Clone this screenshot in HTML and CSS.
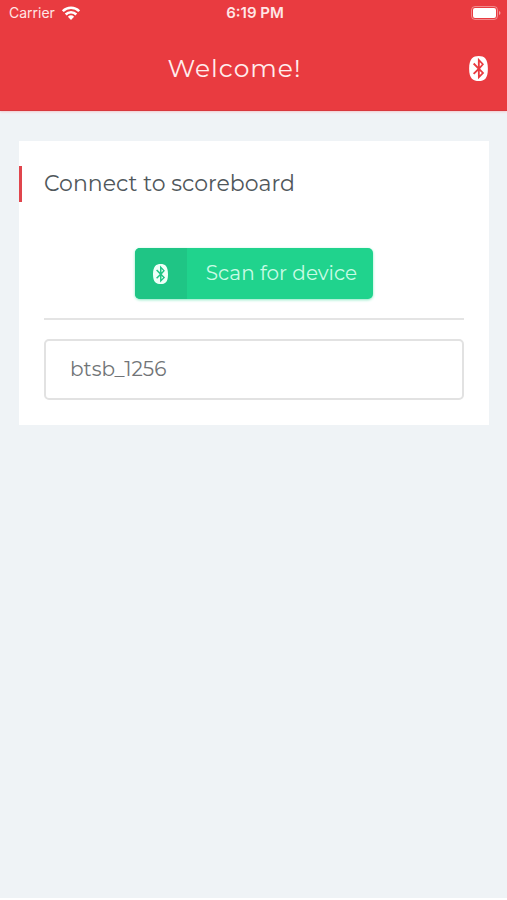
FILE: index.html
```html
<!DOCTYPE html>
<html lang="en">
<head>
  <meta charset="utf-8">
  <meta name="viewport" content="width=device-width, initial-scale=1">
  <title>Welcome!</title>
  <link rel="stylesheet" href="styles.css">
</head>
<body>
  <svg class="sprite" aria-hidden="true">
    <symbol id="bluetooth" viewBox="32 0 384 512">
      <path fill="currentColor" d="M292.6 171.1L249.7 214l-.3-86 43.2 43.1m-43.2 219.8l43.1-43.1-42.9-42.9-.2 86zM416 259.4C416 465 344.1 512 230.9 512S32 465 32 259.4 115.4 0 228.6 0 416 53.9 416 259.4zm-158.5 0l79.4-88.6L211.8 36.5v176.9L138 139.6l-27 26.9 92.7 93-92.7 93 26.9 26.9 73.8-73.8 2.3 170 127.4-127.5-83.9-88.7z"/>
    </symbol>
  </svg>
  <header class="header">
    <div class="status">
      <div class="carrier">
        <span>Carrier</span>
        <svg class="wifi" viewBox="0 0 18 14" aria-hidden="true">
          <g fill="none" stroke="currentColor" stroke-width="2.6">
            <path d="M.8 5.2a11.6 11.6 0 0 1 16.4 0"/>
            <path d="M3.7 8.5a7.5 7.5 0 0 1 10.6 0"/>
          </g>
          <path fill="currentColor" d="M5.9 10.8a4.5 4.5 0 0 1 6.2 0L9 13.9z"/>
        </svg>
      </div>
      <span class="clock">6:19 PM</span>
      <svg class="battery" viewBox="0 0 30 14" aria-hidden="true">
        <rect x=".5" y=".5" width="26" height="13" rx="3.5" fill="none" stroke="currentColor" opacity=".4"/>
        <rect x="2" y="2" width="23" height="10" rx="2" fill="currentColor"/>
        <path d="M28 5v4q1.5-.6 1.5-2T28 5z" fill="currentColor" opacity=".5"/>
      </svg>
    </div>
    <div class="navbar">
      <h1 class="title">Welcome!</h1>
      <button class="nav-button" type="button" aria-label="Bluetooth">
        <svg class="nav-icon" aria-hidden="true"><use href="#bluetooth"/></svg>
      </button>
    </div>
  </header>
  <main class="content">
    <section class="card">
      <h2 class="card-title">Connect to scoreboard</h2>
      <div class="card-body">
        <button class="scan" type="button">
          <span class="scan-icon"><svg class="scan-glyph" aria-hidden="true"><use href="#bluetooth"/></svg></span>
          <span class="scan-label">Scan for device</span>
        </button>
        <hr class="divider">
        <button class="device" type="button">btsb_1256</button>
      </div>
    </section>
  </main>
</body>
</html>
```
FILE: styles.css
```css
* {
  box-sizing: border-box;
}

body {
  margin: 0;
  min-height: 100vh;
  display: flex;
  flex-direction: column;
  background: #eff3f6;
  font-family: Montserrat, Inter, "Open Sans", sans-serif;
  font-weight: 400;
  color: #50575b;
}

button {
  font: inherit;
  margin: 0;
  border: 0;
  cursor: pointer;
}

.sprite {
  display: none;
}

.header {
  background: #e93b40;
  color: #fff;
  border-bottom: 1px solid #d8383d;
  box-shadow: 0 1px 2px #f3c9ce;
}

.status {
  display: grid;
  grid-template-columns: 1fr auto 1fr;
  align-items: center;
  height: 26px;
  padding: 0 6px 0 9px;
  font: 14px/20px Inter, Roboto, sans-serif;
  color: #ffe6e6;
}

.carrier {
  display: flex;
  align-items: center;
  gap: 7px;
}

.wifi {
  width: 18px;
  height: 14px;
  color: #fff;
}

.clock {
  font-size: 15px;
  font-weight: 600;
}

.battery {
  width: 30px;
  height: 14px;
  justify-self: end;
  color: #fff;
}

.navbar {
  display: grid;
  grid-template-columns: 1fr auto 1fr;
  align-items: center;
  height: 84px;
  padding: 0 19px;
}

.title {
  grid-column: 2;
  margin: 0;
  padding-right: 38px;
  font-size: 25px;
  line-height: 32px;
  font-weight: 400;
  letter-spacing: 1px;
  color: #ffeded;
}

.nav-button {
  justify-self: end;
  display: flex;
  padding: 0;
  background: none;
  color: #fff;
}

.nav-icon {
  width: 19px;
  height: 25px;
}

.content {
  flex: 1;
  padding: 30px 18px 30px 19px;
  border-bottom: 2px solid #fff;
}

.card {
  padding: 25px 0;
  background: #fff;
}

.card-title {
  margin: 0;
  padding: 0 22px;
  border-left: 3px solid #e0454c;
  font-size: 22px;
  line-height: 36px;
  font-weight: 400;
}

.card-body {
  display: flex;
  flex-direction: column;
  padding: 46px 25px 0;
}

.scan {
  align-self: center;
  display: flex;
  align-items: stretch;
  height: 51px;
  padding: 0;
  overflow: hidden;
  border-radius: 5px;
  background: #20d38d;
  box-shadow: 0 1px 3px #8aeac4;
  color: #c9fbe5;
}

.scan-icon {
  display: flex;
  align-items: center;
  justify-content: center;
  width: 52px;
  background: #1fc585;
  color: #effff8;
}

.scan-glyph {
  width: 15px;
  height: 20px;
}

.scan-label {
  padding: 0 16px 0 19px;
  font-size: 20px;
  line-height: 50px;
}

.divider {
  width: 100%;
  margin: 19px 0;
  border: 0;
  border-top: 2px solid #e4e4e4;
}

.device {
  width: 100%;
  height: 61px;
  padding: 0 24px 2px;
  border: 2px solid #e2e2e2;
  border-radius: 5px;
  background: #fff;
  color: #717477;
  font-size: 20px;
  line-height: 24px;
  text-align: left;
}
```
